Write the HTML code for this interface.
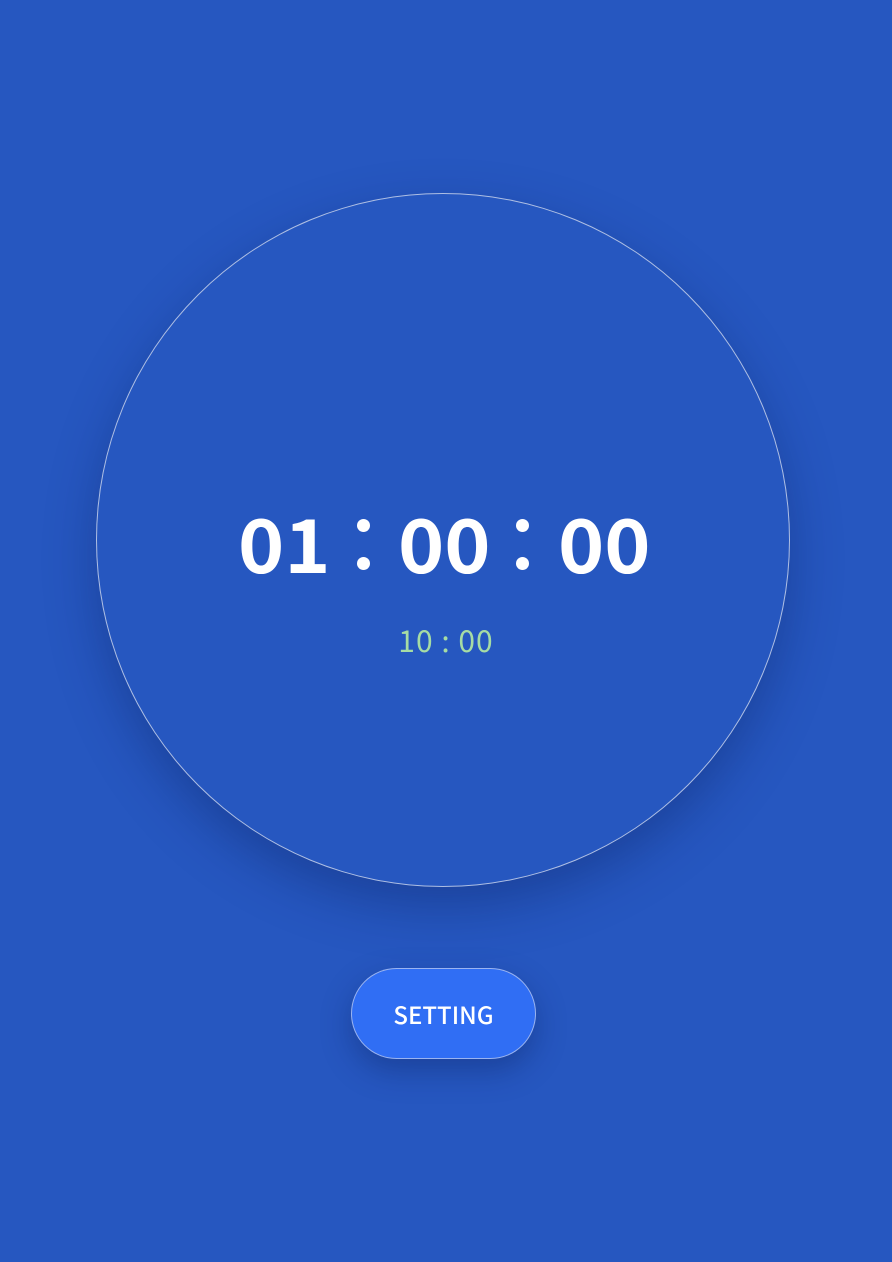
<!DOCTYPE html>
<html><head><meta charset="utf-8"><style>
html,body{margin:0;padding:0;}
body{width:892px;height:1262px;background:#2657c0;position:relative;overflow:hidden;font-family:"Noto Sans CJK SC","Liberation Sans",sans-serif;}
.circle{position:absolute;left:96px;top:193px;width:694px;height:694px;border-radius:50%;border:1px solid rgba(220,225,240,0.75);box-sizing:border-box;box-shadow:0 20px 50px rgba(10,30,90,0.35);background:#2657c0;}
.t{position:absolute;color:#fff;font-weight:700;font-size:74px;line-height:1;top:505px;transform:scaleX(1.06);transform-origin:left;}
.c{position:absolute;background:#fff;width:13px;height:13px;border-radius:50%;}
.sub{position:absolute;left:0;width:892px;text-align:center;top:624px;color:#a6dca4;font-size:30px;line-height:1;letter-spacing:1px;}
.btn{position:absolute;left:351px;top:968px;width:185px;height:91px;border-radius:46px;background:#306ef4;border:1px solid rgba(200,210,240,0.7);box-sizing:border-box;box-shadow:0 12px 30px rgba(10,30,90,0.35);color:#fff;font-size:24px;font-weight:500;text-align:center;line-height:89px;}
</style></head><body>
<div class="circle"></div>
<div class="t" style="left:238px">01</div>
<div class="c" style="left:357px;top:519px"></div>
<div class="c" style="left:357px;top:557px"></div>
<div class="t" style="left:398px">00</div>
<div class="c" style="left:516px;top:519px"></div>
<div class="c" style="left:516px;top:557px"></div>
<div class="t" style="left:558px">00</div>
<div class="sub">10 : 00</div>
<div class="btn">SETTING</div>
</body></html>
